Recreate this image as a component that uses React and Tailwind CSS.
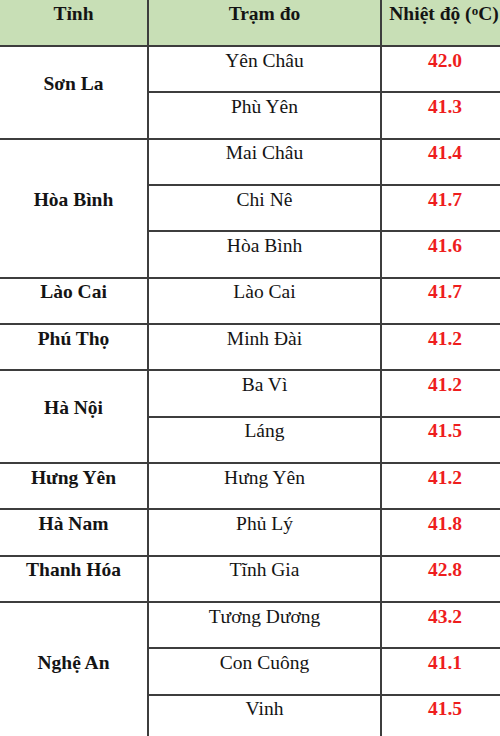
const rows = [
  { province: 'Sơn La', stations: [['Yên Châu', '42.0'], ['Phù Yên', '41.3']] },
  { province: 'Hòa Bình', stations: [['Mai Châu', '41.4'], ['Chi Nê', '41.7'], ['Hòa Bình', '41.6']] },
  { province: 'Lào Cai', stations: [['Lào Cai', '41.7']] },
  { province: 'Phú Thọ', stations: [['Minh Đài', '41.2']] },
  { province: 'Hà Nội', stations: [['Ba Vì', '41.2'], ['Láng', '41.5']] },
  { province: 'Hưng Yên', stations: [['Hưng Yên', '41.2']] },
  { province: 'Hà Nam', stations: [['Phủ Lý', '41.8']] },
  { province: 'Thanh Hóa', stations: [['Tĩnh Gia', '42.8']] },
  { province: 'Nghệ An', stations: [['Tương Dương', '43.2'], ['Con Cuông', '41.1'], ['Vinh', '41.5']] },
]

const spans = {
  1: 'row-span-1',
  2: 'row-span-2',
  3: 'row-span-3',
}

const cell = "bg-white flex items-center justify-center pb-[18px] font-['Liberation_Serif','Times_New_Roman',serif]"
const head = "bg-[#c8dfb6] flex items-center justify-center pb-[19px] font-bold font-['Liberation_Serif','Times_New_Roman',serif]"

function App() {
  return (
    <div className="w-[500px] h-[736px] overflow-hidden bg-white text-[#141414] font-serif text-[19.5px] leading-[23px]">
      <div className="grid grid-cols-[147px_231px_118px] grid-rows-[45px] auto-rows-[44.33px] gap-[2px] bg-[#3d3d3d]">
        {/* header */}
        <div className={head}>Tỉnh</div>
        <div className={head}>Trạm đo</div>
        <div className={head + ' pl-[6px] whitespace-nowrap'}>
          Nhiệt độ (<sup className="text-[13px] relative -top-[2px]">o</sup>C)
        </div>

        {rows.map((r) =>
          r.stations.map(([station, temp], i) => (
            <>
              {i === 0 && (
                <div key={r.province} className={`${cell} font-bold ${spans[r.stations.length]}`}>
                  {r.province}
                </div>
              )}
              <div key={station + 's'} className={cell}>
                {station}
              </div>
              <div key={station + 't'} className={`${cell} pl-[8px] font-bold text-[#ee1d1d]`}>
                {temp}
              </div>
            </>
          ))
        )}
      </div>
    </div>
  )
}

export default App
